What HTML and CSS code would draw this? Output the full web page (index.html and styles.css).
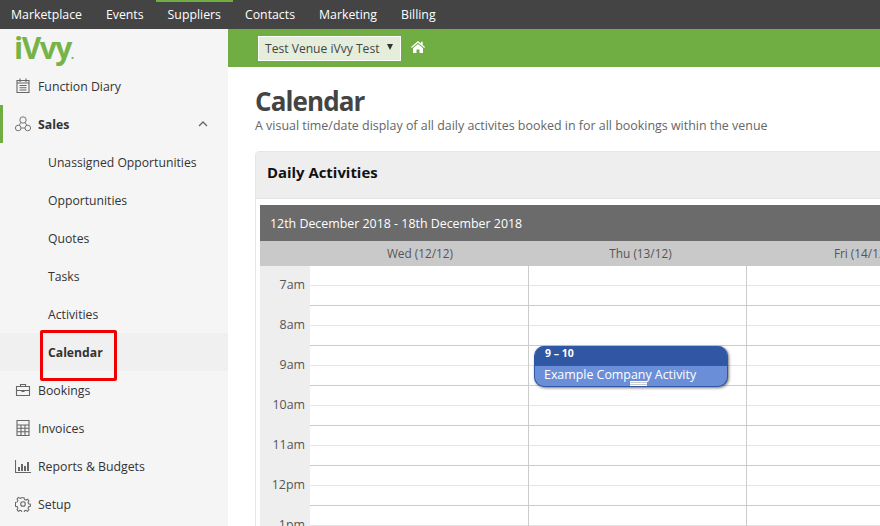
FILE: index.html
```html
<!DOCTYPE html>
<html lang="en">
	<head>
		<meta charset="UTF-8">
		<title>Calendar</title>
		<link rel="stylesheet" href="styles.css">
	</head>
	<body>
		<div class="topbar">
			<a href="#">Marketplace</a>
			<a href="#">Events</a>
			<a href="#" class="on">Suppliers</a>
			<a href="#">Contacts</a>
			<a href="#">Marketing</a>
			<a href="#">Billing</a>
		</div>
		<div class="wrap">
			<div class="sidebar">
				<div class="logo">iVvy<em>.</em></div>
				<a href="#" class="item">
					<svg viewBox="0 0 16 16"><path d="M2 2.500h12v12H2zM2 5h12M5 .5v3.500M11 .5v3.500M4.500 7.500h7M4.500 9.700h7M4.500 12h7"/></svg>
					Function Diary
				</a>
				<a href="#" class="item open">
					<svg class="thin" viewBox="0 0 16 16"><circle cx="8" cy="4" r="3.200"/><circle cx="3.200" cy="12" r="2.800"/><circle cx="12.800" cy="12" r="2.800"/><path d="M6 12h4M6 6.500l-2 3M10 6.500l2 3"/></svg>
					Sales
					<svg class="chev" viewBox="0 0 10 6"><path d="M1 5l4-4 4 4"/></svg>
				</a>
				<a href="#" class="sub">Unassigned Opportunities</a>
				<a href="#" class="sub">Opportunities</a>
				<a href="#" class="sub">Quotes</a>
				<a href="#" class="sub">Tasks</a>
				<a href="#" class="sub">Activities</a>
				<a href="#" class="sub cur">Calendar</a>
				<a href="#" class="item">
					<svg viewBox="0 0 16 16"><path d="M1.500 4.500h13v9h-13zM5.500 4.500V2.500h5v2M1.500 8.500h13M7 8v1.500h2V8"/></svg>
					Bookings
				</a>
				<a href="#" class="item">
					<svg viewBox="0 0 16 16"><path d="M2 .5h12v15H2zM2 5h12M2 8.300h12M2 11.700h12M6 5v10.500M10 5v10.500"/></svg>
					Invoices
				</a>
				<a href="#" class="item">
					<svg viewBox="0 0 16 16"><path d="M.5 2v12.500h15.500"/><path class="bars" d="M4 9v4M7 6v7M10 8v5M13 4v9"/></svg>
					Reports &amp; Budgets
				</a>
				<a href="#" class="item">
					<svg viewBox="0 0 16 16"><circle cx="8" cy="8" r="2.300"/><path d="M6.800 1.500h2.400l.4 2 1.500.7 1.800-1 1.600 1.700-1 1.700.6 1.500 2 .5v2.300l-2 .5-.6 1.500 1 1.700-1.600 1.700-1.800-1-1.500.6-.4 2H6.800l-.4-2-1.500-.6-1.800 1-1.600-1.700 1-1.700-.6-1.500-2-.5V6.600l2-.5.6-1.500-1-1.700 1.600-1.700 1.800 1 1.500-.7z" transform="translate(.6 .3) scale(.92)"/></svg>
					Setup
				</a>
			</div>
			<div class="content">
				<div class="venuebar">
					<div class="venue">Test Venue iVvy Test <i></i></div>
					<svg class="home" viewBox="0 0 14 12"><path d="M7 0L0 6l.8 1L7 1.800 13.200 7l.8-1-2.300-2V.8H10v1.800z"/><path d="M7 3L2 7.200V12h3.500V8.500h3V12H12V7.200z"/></svg>
				</div>
				<div class="page">
					<h1>Calendar</h1>
					<p class="desc">A visual time/date display of all daily activites booked in for all bookings within the venue</p>
					<div class="panel">
						<div class="panel-head">Daily Activities</div>
						<div class="panel-body">
							<div class="range">12th December 2018 - 18th December 2018</div>
							<div class="days">
								<span></span>
								<span>Wed (12/12)</span>
								<span>Thu (13/12)</span>
								<span>Fri (14/12)</span>
							</div>
							<div class="grid">
								<div class="row"><b>7am</b><span></span><span></span><span></span></div>
								<div class="row"><b>8am</b><span></span><span></span><span></span></div>
								<div class="row"><b>9am</b><span></span><span></span><span></span></div>
								<div class="row"><b>10am</b><span></span><span></span><span></span></div>
								<div class="row"><b>11am</b><span></span><span></span><span></span></div>
								<div class="row"><b>12pm</b><span></span><span></span><span></span></div>
								<div class="row"><b>1pm</b><span></span><span></span><span></span></div>
								<div class="event">
									<div class="event-time">9 – 10</div>
									<div class="event-title">Example Company Activity</div>
									<div class="event-grip"></div>
								</div>
							</div>
						</div>
					</div>
				</div>
			</div>
		</div>
		<div class="marker"></div>
	</body>
</html>
```

FILE: styles.css
```css
* {
	margin: 0;
	padding: 0;
	box-sizing: border-box;
}

html, body {
	width: 100%;
	height: 100%;
	overflow: hidden;
}

body {
	position: relative;
	font-family: "Open Sans", "Noto Sans", sans-serif;
	font-size: 13px;
	color: #444;
	background: #fff;
}

a {
	text-decoration: none;
	color: inherit;
}

/*top nav*/
.topbar {
	display: flex;
	height: 29px;
	padding-left: 0;
	background: #444;
}

.topbar a {
	padding: 0 12px;
	color: #fff;
	font-size: 12.300px;
	border-top: 2px solid transparent;
	line-height: 26px;
}

.topbar a:first-child {
	padding-left: 11px;
}

.topbar a.on {
	border-top-color: #70ae43;
}

.wrap {
	display: flex;
	height: 497px;
}

/*sidebar*/
.sidebar {
	flex: none;
	width: 228px;
	background: #f5f5f5;
}

.logo {
	height: 38px;
	padding-left: 14px;
	font-size: 30px;
	line-height: 38px;
	font-weight: 700;
	letter-spacing: -1.500px;
	color: #76b348;
}

.logo em {
	font-size: 12px;
	font-style: normal;
	letter-spacing: 0;
}

.item, .sub {
	display: flex;
	align-items: center;
	height: 38px;
	font-size: 12.200px;
	color: #333;
}

.item {
	padding-left: 15px;
	border-left: 0 solid #70ae43;
	font-size: 12.300px;
}

.item svg {
	flex: none;
	width: 16px;
	height: 16px;
	margin-right: 7px;
	fill: none;
	stroke: #666;
	stroke-width: 1.100;
}

.item .thin {
	stroke-width: .9;
}

.item .bars {
	stroke-width: 2;
}

.item.open {
	padding-left: 12px;
	border-left-width: 3px;
	font-weight: 700;
}

.item .chev {
	width: 10px;
	height: 6px;
	margin: 0 20px 0 auto;
	stroke: #666;
	stroke-width: 1.300;
}

.sub {
	padding-left: 48px;
}

.sub.cur {
	background: #f0f0f0;
	font-weight: 700;
}

/*main*/
.content {
	flex: 1;
	min-width: 0;
	overflow: hidden;
}

.venuebar {
	display: flex;
	align-items: center;
	height: 38px;
	padding-left: 30px;
	background: #70ae43;
}

.venue {
	display: flex;
	align-items: center;
	width: 143px;
	height: 25px;
	padding-left: 6px;
	border: 1px solid #fff;
	background: #e4eedb;
	font-size: 12.100px;
	color: #444;
}

.venue i {
	width: 0;
	height: 0;
	margin: -3px 0 0 8px;
	border-left: 3.500px solid transparent;
	border-right: 3.500px solid transparent;
	border-top: 6px solid #333;
}

.home {
	width: 14px;
	height: 12px;
	margin: -3px 0 0 10px;
	fill: #fff;
}

.page {
	padding: 18px 0 0 27px;
}

h1 {
	font-size: 26px;
	line-height: 32px;
	font-weight: 700;
	letter-spacing: -.9px;
	color: #444;
}

.desc {
	font-size: 12.450px;
	line-height: 17px;
	color: #666;
}

.panel {
	width: 700px;
	margin-top: 17px;
	border: 1px solid #e6e6e6;
	border-radius: 4px 0 0 0;
}

.panel-head {
	height: 47px;
	padding-left: 11px;
	line-height: 41px;
	font-size: 14.900px;
	font-weight: 700;
	color: #111;
	background: #eee;
	border-bottom: 1px solid #e4e4e4;
}

.panel-body {
	padding: 6px 0 0 4px;
}

.range {
	height: 36px;
	padding-left: 10px;
	line-height: 37px;
	font-size: 12.400px;
	color: #fff;
	background: #6b6b6b;
}

.days, .row {
	display: grid;
	grid-template-columns: 50px 219px 218px 218px;
}

.days {
	grid-template-columns: 50px 220px 221px 221px;
	height: 25px;
	line-height: 25px;
	background: #c9c9c9;
	text-align: center;
	font-size: 11.800px;
	color: #555;
}

.grid {
	position: relative;
}

.row {
	height: 40px;
}

.row b {
	padding-right: 5px;
	line-height: 38px;
	font-weight: 400;
	font-size: 12.400px;
	text-align: right;
	color: #555;
	background: #eee;
}

.row span {
	border-right: 1px solid #ccc;
	border-bottom: 1px solid #ccc;
	background: linear-gradient(#fff 19px, #e4e4e4 19px, #e4e4e4 20px, #fff 20px);
}

/*event block sits over the grid*/
.event {
	position: absolute;
	left: 274px;
	top: 80px;
	width: 194px;
	height: 41px;
	overflow: hidden;
	border-radius: 10px;
	background: #6a8fd8;
	border: 1px solid #2f57a4;
	border-top: 0;
	box-shadow: 1px 1px 3px rgba(0, 0, 0, .55);
	color: #fff;
}

.event-time {
	height: 20px;
	padding-left: 10px;
	line-height: 14px;
	font-size: 10.500px;
	font-weight: 700;
	background: #2f57a4;
}

.event-title {
	padding-left: 9px;
	line-height: 17px;
	font-size: 12.400px;
}

.event-grip {
	position: absolute;
	left: 95px;
	bottom: 0;
	width: 17px;
	height: 5px;
	border-top: 1px solid #fff;
	border-bottom: 1px solid #fff;
	background: linear-gradient(#ccc 1px, #fff 1px, #fff 2px, #ccc 2px);
}

/*red highlight drawn on top of the screenshot*/
.marker {
	position: absolute;
	left: 40px;
	top: 330px;
	width: 77px;
	height: 51px;
	border: 3px solid #f00000;
	border-radius: 2px;
}
```
